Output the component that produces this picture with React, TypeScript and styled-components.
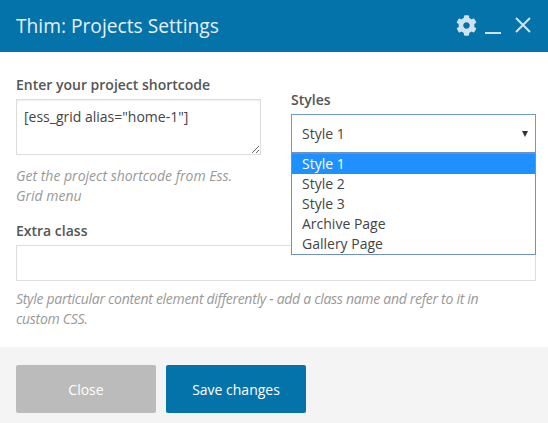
import styled, { createGlobalStyle } from "styled-components";
import { FaCog } from "react-icons/fa";

const GlobalStyle = createGlobalStyle`
  * {
    box-sizing: border-box;
  }
  html, body {
    margin: 0;
    padding: 0;
    background: #fff;
    font-family: "Open Sans", sans-serif;
  }
`;

const Dialog = styled.div`
  width: 548px;
  height: 423px;
  display: flex;
  flex-direction: column;
  overflow: hidden;
`;

const Header = styled.header`
  height: 52px;
  flex: none;
  background: #0473aa;
  display: flex;
  align-items: center;
  justify-content: space-between;
  padding: 0 17px 2px 16px;
`;

const Title = styled.h1`
  margin: 0;
  font-size: 19.2px;
  font-weight: 400;
  color: #e4f0f6;
`;

const HeaderIcons = styled.div`
  display: flex;
  align-items: center;
  gap: 8px;
  color: #cfe3ee;
`;

const Body = styled.main`
  flex: 1;
  padding: 23px 12px 0 16px;
`;

const Columns = styled.div`
  display: grid;
  grid-template-columns: 245px 245px;
  column-gap: 30px;
`;

const Field = styled.div<{ $top?: number }>`
  padding-top: ${(p) => p.$top ?? 0}px;
  position: relative;
`;

const Label = styled.label`
  display: block;
  font-size: 14px;
  line-height: 20px;
  font-weight: 600;
  color: #555;
  margin-bottom: 4px;
`;

const Shortcode = styled.textarea`
  display: block;
  width: 245px;
  height: 56px;
  margin: 0;
  padding: 7px 7px;
  border: 1px solid #ddd;
  border-radius: 0;
  outline: none;
  resize: vertical;
  font-family: inherit;
  font-size: 14px;
  line-height: 20px;
  color: #444;
  box-shadow: inset 0 1px 2px rgba(0, 0, 0, 0.07);
`;

const Hint = styled.p<{ $gap: number; $tight?: boolean }>`
  margin: ${(p) => p.$gap}px 0 0;
  max-width: 490px;
  font-size: 14px;
  line-height: 20px;
  font-style: italic;
  letter-spacing: ${(p) => (p.$tight ? "-0.29px" : "0")};
  color: #999;
`;

const SelectBox = styled.div`
  height: 39px;
  display: flex;
  align-items: center;
  justify-content: space-between;
  padding: 0 7px 0 10px;
  border: 1px solid #6d9bd1;
  font-size: 14px;
  color: #444;
  background: #fff;
`;

const Caret = styled.span`
  width: 0;
  height: 0;
  border-left: 3px solid transparent;
  border-right: 3px solid transparent;
  border-top: 6px solid #333;
`;

const Options = styled.ul`
  position: absolute;
  left: 0;
  right: 0;
  top: 77px;
  z-index: 2;
  margin: 0;
  padding: 0;
  list-style: none;
  background: #fff;
  border: 1px solid #6f8fc9;
  border-top-width: 2px;
`;

const Option = styled.li<{ $active?: boolean }>`
  height: 20px;
  padding: 0 10px;
  font-size: 14px;
  line-height: 20px;
  color: ${(p) => (p.$active ? "#fff" : "#444")};
  background: ${(p) => (p.$active ? "#1e90ff" : "transparent")};
`;

const ExtraSection = styled.section`
  margin-top: 15px;
`;

const ExtraInput = styled.input`
  display: block;
  width: 520px;
  height: 36px;
  margin: 0;
  padding: 0 8px;
  border: 1px solid #ddd;
  outline: none;
  background: #fff;
`;

const Footer = styled.footer`
  height: 76px;
  flex: none;
  background: #f4f4f4;
  display: flex;
  align-items: flex-start;
  gap: 10px;
  padding: 18px 16px 0;
`;

const Button = styled.button<{ $primary?: boolean }>`
  width: 140px;
  height: 48px;
  border: none;
  border-radius: 2px;
  font-family: inherit;
  font-size: 14px;
  color: #fff;
  background: ${(p) => (p.$primary ? "#0473aa" : "#bbb")};
`;

const options = ["Style 1", "Style 2", "Style 3", "Archive Page", "Gallery Page"];

export default function App() {
  return (
    <>
      <GlobalStyle />
      <Dialog>
        <Header>
          <Title>Thim: Projects Settings</Title>
          <HeaderIcons>
            <FaCog size={21} />
            <svg width="16" height="21" viewBox="0 0 16 21">
              <rect x="0" y="17" width="16" height="2" fill="currentColor" />
            </svg>
            <svg width="16" height="16" viewBox="0 0 16 16" style={{ marginLeft: 6 }}>
              <path d="M1 1 L15 15 M15 1 L1 15" stroke="currentColor" strokeWidth="2" fill="none" />
            </svg>
          </HeaderIcons>
        </Header>
        <Body>
          <Columns>
            <Field>
              <Label>Enter your project shortcode</Label>
              <Shortcode readOnly value={'[ess_grid alias="home-1"]'} />
              <Hint $gap={11}>Get the project shortcode from Ess. Grid menu</Hint>
            </Field>
            <Field $top={15}>
              <Label>Styles</Label>
              <SelectBox>
                Style 1
                <Caret />
              </SelectBox>
              <Options>
                {options.map((o, i) => (
                  <Option key={o} $active={i === 0}>
                    {o}
                  </Option>
                ))}
              </Options>
            </Field>
          </Columns>
          <ExtraSection>
            <Label>Extra class</Label>
            <ExtraInput readOnly />
            <Hint $gap={8} $tight>
              Style particular content element differently - add a class name and refer to it in
              custom CSS.
            </Hint>
          </ExtraSection>
        </Body>
        <Footer>
          <Button>Close</Button>
          <Button $primary>Save changes</Button>
        </Footer>
      </Dialog>
    </>
  );
}
